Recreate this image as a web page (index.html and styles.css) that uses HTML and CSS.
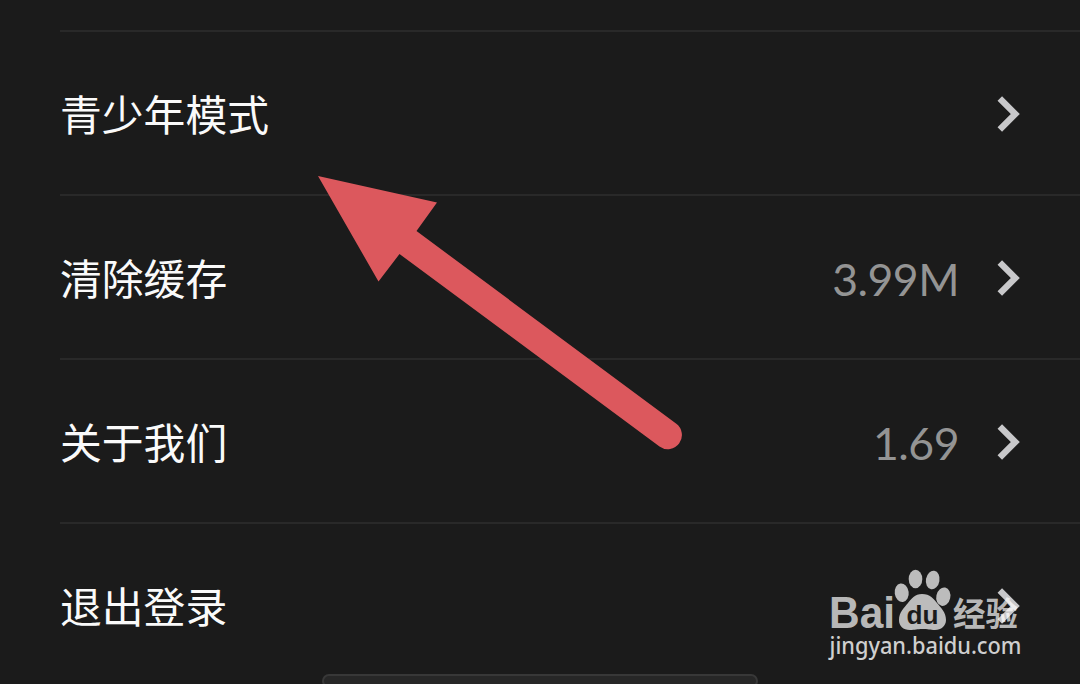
FILE: index.html
```html
<!DOCTYPE html>
<html lang="zh-CN">
<head>
  <meta charset="UTF-8">
  <meta name="viewport" content="width=device-width, initial-scale=1.0">
  <title>设置</title>
  <link rel="stylesheet" href="styles.css">
</head>
<body>
  <main class="settings">
    <div class="row">
      <span class="label">青少年模式</span>
      <svg class="chevron" viewBox="0 0 24 38"><path d="M3.8 4.500 L19.3 20 L3.8 35.500"/></svg>
    </div>
    <div class="row">
      <span class="label">清除缓存</span>
      <span class="value">3.99M</span>
      <svg class="chevron" viewBox="0 0 24 38"><path d="M3.8 4.500 L19.3 20 L3.8 35.500"/></svg>
    </div>
    <div class="row">
      <span class="label">关于我们</span>
      <span class="value">1.69</span>
      <svg class="chevron" viewBox="0 0 24 38"><path d="M3.8 4.500 L19.3 20 L3.8 35.500"/></svg>
    </div>
    <div class="row">
      <span class="label">退出登录</span>
      <svg class="chevron" viewBox="0 0 24 38"><path d="M3.8 4.500 L19.3 20 L3.8 35.500"/></svg>
    </div>
  </main>

  <div class="home-bar"></div>

  <!-- Pointer arrow -->
  <svg class="arrow" viewBox="0 0 366 276">
    <path d="M0 0 L119 26.5 L98.5 55 L358 247.5 A14 14 0 0 1 341.5 270.5 L81.5 78 L60.5 105.5 Z"/>
  </svg>

  <!-- Watermark -->
  <svg class="watermark" viewBox="0 0 200 100">
    <g class="mark">
      <text class="brand" x="9" y="63.3" textLength="66" lengthAdjust="spacingAndGlyphs">Bai</text>
      <ellipse cx="81.7" cy="27.7" rx="7" ry="9.3" transform="rotate(-8 81.7 27.7)"/>
      <ellipse cx="95.5" cy="14" rx="6.8" ry="9.3"/>
      <ellipse cx="112.7" cy="15" rx="6.8" ry="9.3" transform="rotate(10 112.7 15)"/>
      <ellipse cx="123.3" cy="31.7" rx="7" ry="9.3" transform="rotate(12 123.3 31.7)"/>
      <path d="M102 29 C110 29 114 34 117 38 C121 43 126 47 126 55 C126 61 121 65 115 65 C110 65 108 64 102.5 64 C97 64 95 65 90 65 C83 65 79 61 79 55 C79 47 84 43 88 38 C91 34 95 29 102 29 Z"/>
      <text class="brand-cn" x="133" y="60.5" textLength="65" lengthAdjust="spacingAndGlyphs">经验</text>
    </g>
    <text class="du" x="86.5" y="59" textLength="32" lengthAdjust="spacingAndGlyphs">du</text>
    <text class="site" x="9.5" y="89.3" textLength="192" lengthAdjust="spacingAndGlyphs">jingyan.baidu.com</text>
  </svg>
</body>
</html>
```
FILE: styles.css
```css
:root {
  --bg-color: #1b1b1b;
  --line-color: #292929;
  --text-color: #fafafa;
  --value-color: #949494;
  --chevron-color: #c8c8ca;
  --arrow-color: #dc585d;
}

* {
  box-sizing: border-box;
}

body {
  position: relative;
  width: 1080px;
  height: 684px;
  margin: 0;
  overflow: hidden;
  background-color: var(--bg-color);
  color: var(--text-color);
  font-family: "Noto Sans CJK SC", sans-serif;
}

.settings {
  padding: 30px 0 0 60px;
}

.row {
  display: flex;
  align-items: center;
  height: 164px;
  padding-right: 60px;
  border-top: 2px solid var(--line-color);
}

.label {
  flex: 1;
  font-size: 41.8px;
  line-height: 60px;
}

.value {
  margin-right: 37px;
  padding-top: 3px;
  font-family: Lato, sans-serif;
  font-size: 44.5px;
  letter-spacing: -0.5px;
  color: var(--value-color);
}

.chevron {
  width: 24px;
  height: 38px;
  fill: none;
  stroke: var(--chevron-color);
  stroke-width: 6.4;
}

.home-bar {
  position: absolute;
  left: 322px;
  top: 674px;
  width: 436px;
  height: 14px;
  border: 2px solid #383838;
  border-radius: 7px;
  background-color: #272727;
}

.arrow {
  position: absolute;
  left: 317.5px;
  top: 175.5px;
  width: 366px;
  height: 276px;
  fill: var(--arrow-color);
}

.watermark {
  position: absolute;
  left: 820px;
  top: 565px;
  width: 200px;
  height: 100px;
  overflow: visible;
}

.mark {
  fill: rgba(255, 255, 255, 0.71);
}

.brand {
  font-family: "Liberation Sans", sans-serif;
  font-size: 45px;
  font-weight: bold;
}

.brand-cn {
  font-size: 33px;
  font-weight: bold;
}

.du {
  fill: var(--bg-color);
  font-family: "Liberation Sans", sans-serif;
  font-size: 26px;
  font-weight: bold;
}

.site {
  fill: #cfcfcf;
  font-family: "Noto Sans", sans-serif;
  font-size: 23px;
  font-weight: 500;
}
```
